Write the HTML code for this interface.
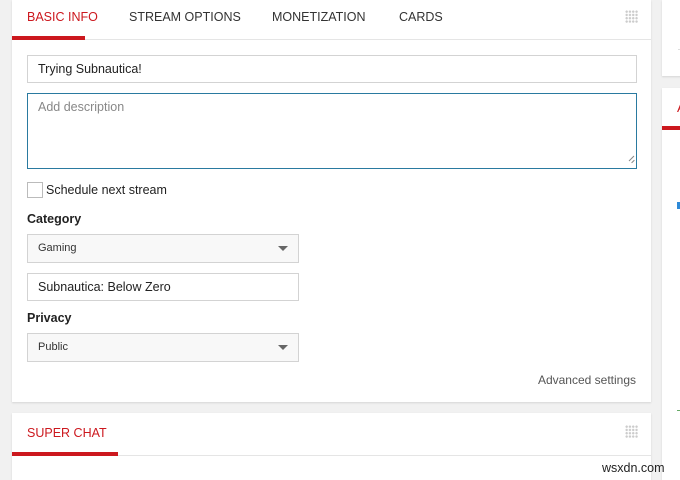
<!DOCTYPE html>
<html style="width:680px;height:480px;overflow:hidden"><head><style>
body{margin:0;width:680px;height:480px;background:#f1f1f1;font-family:"Liberation Sans",sans-serif;position:relative;overflow:hidden;color:#222}
.a{position:absolute}
.card{background:#fff;box-shadow:0 1px 2px rgba(0,0,0,.12)}
.tab{font-size:12.5px;color:#333;top:10px}
.inp{border:1px solid #d3d3d3;background:#fff;box-sizing:border-box;font-size:12.5px;color:#222;padding-left:10px}
.sel{border:1px solid #d3d3d3;background:#f8f8f8;box-sizing:border-box;font-size:11px;color:#333;padding-left:10px}
.arr{position:absolute;right:10px;top:11px;width:0;height:0;border-left:5px solid transparent;border-right:5px solid transparent;border-top:5px solid #666}
.lbl{font-size:12.5px;font-weight:bold;color:#222}
.grip{width:13px;height:13px;background-image:radial-gradient(circle,#ccc 1.2px,transparent 1.3px);background-size:3.3px 3.3px}
</style></head><body>
<div class="a card" style="left:12px;top:0;width:639px;height:402px"></div>
<div class="a" style="left:12px;top:39px;width:639px;height:1px;background:#e5e5e5"></div>
<div class="a" style="left:12px;top:36px;width:73px;height:4px;background:#cc181e"></div>
<div class="a tab" style="left:27px;color:#cc181e">BASIC INFO</div>
<div class="a tab" style="left:129px">STREAM OPTIONS</div>
<div class="a tab" style="left:272px">MONETIZATION</div>
<div class="a tab" style="left:399px">CARDS</div>
<div class="a grip" style="left:625px;top:10px"></div>
<div class="a inp" style="left:27px;top:55px;width:610px;height:28px;line-height:26px">Trying Subnautica!</div>
<div class="a inp" style="left:27px;top:93px;width:610px;height:76px;border-color:#2a7aa0;padding-top:6px;color:#888">Add description</div>
<div class="a" style="left:628px;top:158px;width:7px;height:1px;background:#888;transform:rotate(-45deg)"></div>
<div class="a" style="left:631px;top:161px;width:4px;height:1px;background:#888;transform:rotate(-45deg)"></div>
<div class="a" style="left:27px;top:182px;width:14px;height:14px;border:1px solid #bbb;background:#fff"></div>
<div class="a" style="left:46px;top:183px;font-size:12.5px">Schedule next stream</div>
<div class="a lbl" style="left:27px;top:212px">Category</div>
<div class="a sel" style="left:27px;top:234px;width:272px;height:29px;line-height:27px">Gaming<div class="arr"></div></div>
<div class="a inp" style="left:27px;top:273px;width:272px;height:28px;line-height:26px">Subnautica: Below Zero</div>
<div class="a lbl" style="left:27px;top:311px">Privacy</div>
<div class="a sel" style="left:27px;top:333px;width:272px;height:29px;line-height:27px">Public<div class="arr"></div></div>
<div class="a" style="right:44px;top:373px;font-size:12px;color:#555">Advanced settings</div>
<div class="a card" style="left:12px;top:413px;width:639px;height:70px"></div>
<div class="a" style="left:12px;top:455px;width:639px;height:1px;background:#e5e5e5"></div>
<div class="a" style="left:12px;top:452px;width:106px;height:4px;background:#cc181e"></div>
<div class="a tab" style="left:27px;top:426px;color:#cc181e">SUPER CHAT</div>
<div class="a grip" style="left:625px;top:425px"></div>
<div class="a card" style="left:662px;top:0;width:20px;height:76px"></div>
<div class="a" style="left:678px;top:49px;width:4px;height:1px;background:#ddd"></div>
<div class="a card" style="left:662px;top:88px;width:20px;height:400px"></div>
<div class="a" style="left:662px;top:126px;width:20px;height:4px;background:#cc181e"></div>
<div class="a" style="left:677px;top:100px;font-size:13px;color:#cc181e">A</div>
<div class="a" style="left:677px;top:202px;width:4px;height:7px;background:#2e8ad8"></div>
<div class="a" style="left:677px;top:410px;width:4px;height:1px;background:#6a6"></div>
<div class="a" style="left:602px;top:461px;font-size:12.5px;color:#222">wsxdn.com</div>
</body></html>
